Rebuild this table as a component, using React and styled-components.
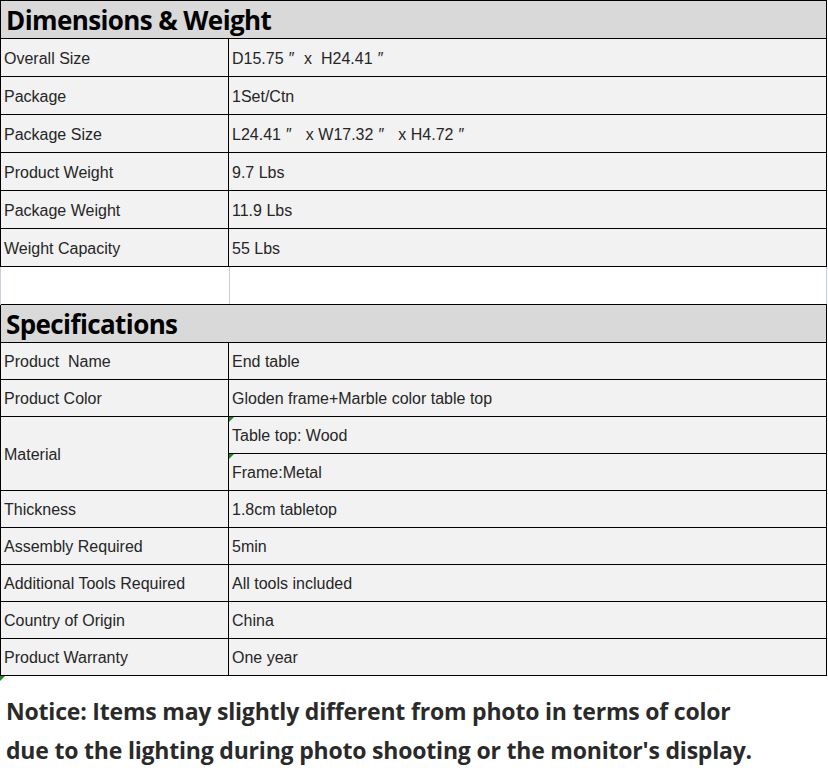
import styled, { createGlobalStyle } from "styled-components";

const GlobalStyle = createGlobalStyle`
  html, body {
    margin: 0;
    padding: 0;
    background: #ffffff;
  }
`;

const Page = styled.div`
  width: 828px;
  font-family: "Liberation Sans", Arial, sans-serif;
  color: #262626;
`;

const Sheet = styled.div`
  display: grid;
  grid-template-columns: 228px 1fr;
  width: 827px;
  border-left: 1px solid #000;
  border-top: 1px solid #000;
  box-sizing: border-box;
`;

const Title = styled.div`
  grid-column: 1 / -1;
  height: ${({ $top }) => ($top ? 39 : 38)}px;
  box-sizing: border-box;
  background: #d9d9d9;
  border-right: 1px solid #000;
  border-bottom: 1px solid #000;
  border-top: ${({ $top }) => ($top ? "1px solid #000" : "none")};
  margin-top: ${({ $top }) => ($top ? "-1px" : "0")};
  padding-left: 5px;
  display: flex;
  align-items: center;
  font-family: "Open Sans", "Noto Sans", sans-serif;
  font-weight: 700;
  font-size: 26px;
  letter-spacing: -0.6px;
  color: #000;
`;

const Cell = styled.div`
  position: relative;
  height: ${({ $h }) => $h}px;
  box-sizing: border-box;
  background: #f2f2f2;
  border-right: 1px solid #000;
  border-bottom: 1px solid #000;
  padding: 2px 0 0 3px;
  display: flex;
  align-items: center;
  font-size: 16px;
  white-space: pre;
  grid-row: ${({ $span }) => ($span ? `span ${$span}` : "auto")};

  ${({ $mark }) =>
    $mark &&
    `
    &::before {
      content: "";
      position: absolute;
      left: 0;
      top: 0;
      border-top: 5px solid #1c8a1c;
      border-right: 5px solid transparent;
    }
  `}
`;

const Inch = styled.span`
  display: inline-block;
  width: 16px;
  text-align: center;
`;

const Blank = styled.div`
  grid-column: 1 / -1;
  height: 38px;
  box-sizing: border-box;
  background: #ffffff;
  margin-left: -1px;
  display: grid;
  grid-template-columns: 229px 1fr;
  border-left: 1px solid #c6d0e0;
  border-right: 1px solid #c6d0e0;
`;

const GhostLine = styled.div`
  border-right: 1px solid #c6d0e0;
`;

const Notice = styled.div`
  position: relative;
  padding: 16px 0 0 6px;
  font-family: "Open Sans", "Noto Sans", sans-serif;
  font-weight: 700;
  font-size: 23px;
  letter-spacing: -0.2px;
  line-height: 39px;
  color: #2a2a2a;

  &::before {
    content: "";
    position: absolute;
    left: 0;
    top: 0;
    border-top: 5px solid #1c8a1c;
    border-right: 5px solid transparent;
  }
`;

const dimensions = [
  ["Overall Size", <>D15.75<Inch>″</Inch> x  H24.41<Inch>″</Inch></>],
  ["Package", "1Set/Ctn"],
  ["Package Size", <>L24.41<Inch>″</Inch>  x W17.32<Inch>″</Inch>  x H4.72<Inch>″</Inch></>],
  ["Product Weight", "9.7 Lbs"],
  ["Package Weight", "11.9 Lbs"],
  ["Weight Capacity", "55 Lbs"],
];

const specsTop = [
  ["Product  Name", "End table"],
  ["Product Color", "Gloden frame+Marble color table top"],
];

const specsBottom = [
  ["Thickness", "1.8cm tabletop"],
  ["Assembly Required", "5min"],
  ["Additional Tools Required", "All tools included"],
  ["Country of Origin", "China"],
  ["Product Warranty", "One year"],
];

const Row = ({ label, value, h }) => (
  <>
    <Cell $h={h}>{label}</Cell>
    <Cell $h={h}>{value}</Cell>
  </>
);

const App = () => {
  return (
    <Page>
      <GlobalStyle />
      <Sheet>
        <Title>Dimensions &amp; Weight</Title>
        {dimensions.map(([label, value]) => (
          <Row key={label} label={label} value={value} h={38} />
        ))}
        <Blank>
          <GhostLine />
          <div />
        </Blank>
        <Title $top>Specifications</Title>
        {specsTop.map(([label, value]) => (
          <Row key={label} label={label} value={value} h={37} />
        ))}
        <Cell $span={2} $h={74}>Material</Cell>
        <Cell $h={37} $mark>Table top: Wood</Cell>
        <Cell $h={37} $mark>Frame:Metal</Cell>
        {specsBottom.map(([label, value]) => (
          <Row key={label} label={label} value={value} h={37} />
        ))}
      </Sheet>
      <Notice>
        Notice: Items may slightly different from photo in terms of color
        <br />
        due to the lighting during photo shooting or the monitor's display.
      </Notice>
    </Page>
  );
};

export default App;
